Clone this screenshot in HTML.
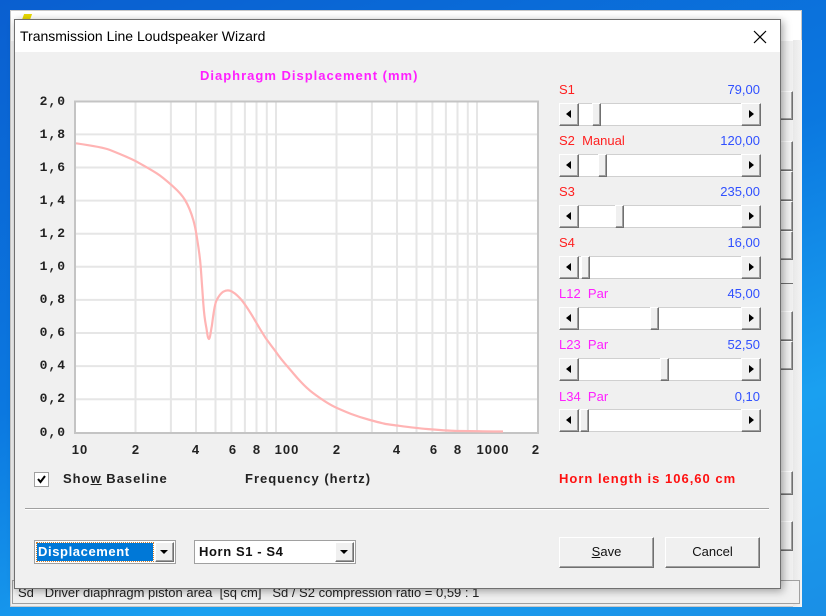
<!DOCTYPE html>
<html><head><meta charset="utf-8"><style>
*{margin:0;padding:0;box-sizing:border-box}
body{width:826px;height:616px;overflow:hidden;position:relative;background:linear-gradient(160deg,#0a5fd0 0%,#0b78e0 45%,#1aa0f0 75%,#1a8fe6 100%);font-family:"Liberation Sans",sans-serif}
.a{position:absolute}
.bgwin{left:10px;top:10px;width:792px;height:597px;background:#f0f0f0;border:1px solid #c8c8c8}
.dlg{left:14px;top:19px;width:767px;height:570px;background:#f0f0f0;border:1px solid #707070;box-shadow:2px 2px 8px rgba(0,0,0,.35)}
.lbl{font-size:13px;color:#ff2020;white-space:pre}
.val{font-size:13px;color:#3050ff;text-align:right;width:120px}
.sb{width:202px;height:23px;background:#fff;border:1px solid #d0d0d0}
.btn{background:#f0f0f0;border-top:1px solid #fff;border-left:1px solid #fff;border-right:1px solid #707070;border-bottom:1px solid #707070;box-shadow:inset -1px -1px 0 #a0a0a0}
.yl{font:bold 13px "Liberation Mono",monospace;color:#222;width:40px;text-align:right;left:26px;letter-spacing:1px}
.xl{font:bold 13px "Liberation Sans",sans-serif;color:#222;top:442px;width:40px;text-align:center;letter-spacing:1px}
.b{font:bold 13px "Liberation Sans",sans-serif;letter-spacing:1px;white-space:pre}
</style></head><body>
<div class="a bgwin"></div>
<div class="a" style="left:11px;top:11px;width:790px;height:30px;background:#fff"></div>
<div class="a" style="left:23px;top:14px;width:8px;height:6px;background:#e8d800;transform:skewX(-20deg)"></div>
<div class="a" style="left:793px;top:40px;width:9px;height:567px;background:linear-gradient(90deg,#e8e8e8,#f4f4f4)"></div>
<div class="a btn" style="left:780px;top:91px;width:13px;height:29px;border-left:none"></div>
<div class="a btn" style="left:780px;top:141px;width:13px;height:30px;border-left:none"></div>
<div class="a btn" style="left:780px;top:171px;width:13px;height:30px;border-left:none"></div>
<div class="a btn" style="left:780px;top:201px;width:13px;height:30px;border-left:none"></div>
<div class="a btn" style="left:780px;top:231px;width:13px;height:29px;border-left:none"></div>
<div class="a" style="left:780px;top:283px;width:13px;height:1px;background:#707070"></div>
<div class="a btn" style="left:780px;top:311px;width:13px;height:30px;border-left:none"></div>
<div class="a btn" style="left:780px;top:341px;width:13px;height:29px;border-left:none"></div>
<div class="a btn" style="left:780px;top:471px;width:13px;height:24px;border-left:none"></div>
<div class="a btn" style="left:780px;top:521px;width:13px;height:30px;border-left:none"></div>
<div class="a" style="left:12px;top:580px;width:788px;height:24px;border:1px solid #a0a0a0;background:#f0f0f0"></div>
<div class="a" style="left:18px;top:585px;font-size:13px;color:#222;white-space:pre">Sd   Driver diaphragm piston area  [sq cm]   Sd / S2 compression ratio = 0,59 : 1</div>

<div class="a dlg">
 <div class="a" style="left:0;top:0;width:765px;height:32px;background:#fff"></div>
 <div class="a" style="left:5px;top:8px;font-size:14px;color:#000">Transmission Line Loudspeaker Wizard</div>
 <svg class="a" style="left:738px;top:10px" width="14" height="14"><path d="M1 1L13 13M13 1L1 13" stroke="#000" stroke-width="1.2"/></svg>
</div>

<div class="a b" style="left:200px;top:68px;color:#ff20ff">Diaphragm Displacement (mm)</div>

<svg class="a" style="left:0;top:0" width="826" height="616">
 <rect x="75" y="101" width="463" height="332" fill="#fff"/>
 <g stroke="#e6e6e6" stroke-width="2">
  <path d="M135.5 101V433M170.9 101V433M196 101V433M215.5 101V433M231.4 101V433M244.9 101V433M256.5 101V433M266.8 101V433M276 101V433M336.5 101V433M371.9 101V433M397 101V433M416.5 101V433M432.4 101V433M445.9 101V433M457.5 101V433M467.8 101V433M477 101V433"/>
  <path d="M75 399.2H538M75 366.1H538M75 333H538M75 299.9H538M75 266.8H538M75 233.7H538M75 200.6H538M75 167.5H538M75 134.4H538"/>
 </g>
 <rect x="75" y="101.5" width="463" height="331.5" fill="none" stroke="#c4c4c4" stroke-width="2"/>
 <path d="M76 143.3C95 146 105 148 110 150S130 158 136.7 161.7S150 169 156.7 173.3S168 182 173.3 186.7S182 195 185 200S191 212 193.3 220S196 232 197.3 240S200 258 200.7 266.7S202 285 203.3 303.3S206 325 206.7 330S208 339 209 339S211 330 211.7 326.7S214 305 216.7 300S221 293 223.3 291.7S228 290 230 290.7S236 294 240 298.3S252 315 260 329S272 346 276.7 353S288 367 293 373S305 387 313 393S328 404 337 408S355 416 370 420S385 424 393 425S415 428 427 429S450 431 460 431S490 431.5 503 431.5" fill="none" stroke="#ffb4b4" stroke-width="2.2"/>
</svg>

<div class="a yl" style="top:94px">2,0</div>
<div class="a yl" style="top:127px">1,8</div>
<div class="a yl" style="top:160px">1,6</div>
<div class="a yl" style="top:193px">1,4</div>
<div class="a yl" style="top:226px">1,2</div>
<div class="a yl" style="top:259px">1,0</div>
<div class="a yl" style="top:292px">0,8</div>
<div class="a yl" style="top:325px">0,6</div>
<div class="a yl" style="top:358px">0,4</div>
<div class="a yl" style="top:391px">0,2</div>
<div class="a yl" style="top:425px">0,0</div>

<div class="a xl" style="left:60px">10</div>
<div class="a xl" style="left:116px">2</div>
<div class="a xl" style="left:176px">4</div>
<div class="a xl" style="left:213px">6</div>
<div class="a xl" style="left:237px">8</div>
<div class="a xl" style="left:267px">100</div>
<div class="a xl" style="left:317px">2</div>
<div class="a xl" style="left:377px">4</div>
<div class="a xl" style="left:414px">6</div>
<div class="a xl" style="left:438px">8</div>
<div class="a xl" style="left:470px;width:46px">1000</div>
<div class="a xl" style="left:516px">2</div>

<div class="a" style="left:34px;top:472px;width:15px;height:15px;background:#fff;border:1px solid #a0a0a0"></div>
<svg class="a" style="left:36px;top:474px" width="11" height="11"><path d="M2 5L4.5 8L9 2" stroke="#000" stroke-width="2" fill="none"/></svg>
<div class="a b" style="left:63px;top:471px;color:#222">Sho<u>w</u> Baseline</div>
<div class="a b" style="left:245px;top:471px;color:#222">Frequency (hertz)</div>
<div class="a b" style="left:559px;top:471px;color:#ff1010">Horn length is 106,60 cm</div>

<div class="a lbl" style="left:559px;top:82px">S1</div><div class="a val" style="left:640px;top:82px">79,00</div>
<div class="a lbl" style="left:559px;top:133px">S2  Manual</div><div class="a val" style="left:640px;top:133px">120,00</div>
<div class="a lbl" style="left:559px;top:184px">S3</div><div class="a val" style="left:640px;top:184px">235,00</div>
<div class="a lbl" style="left:559px;top:235px">S4</div><div class="a val" style="left:640px;top:235px">16,00</div>
<div class="a lbl" style="left:559px;top:286px;color:#ff20ff">L12  Par</div><div class="a val" style="left:640px;top:286px">45,00</div>
<div class="a lbl" style="left:559px;top:337px;color:#ff20ff">L23  Par</div><div class="a val" style="left:640px;top:337px">52,50</div>
<div class="a lbl" style="left:559px;top:389px;color:#ff20ff">L34  Par</div><div class="a val" style="left:640px;top:389px">0,10</div>

<div id="s"></div>
<script>
var tops=[103,154,205,256,307,358,409],th=[592,598,615,581,650,660,580],h='';
for(var i=0;i<7;i++){var t=tops[i];
h+='<div class="a sb" style="left:559px;top:'+t+'px"></div>';
h+='<div class="a btn" style="left:559px;top:'+t+'px;width:20px;height:23px"></div>';
h+='<div class="a" style="left:566px;top:'+(t+7)+'px;width:0;height:0;border-top:4.5px solid transparent;border-bottom:4.5px solid transparent;border-right:5px solid #000"></div>';
h+='<div class="a btn" style="left:741px;top:'+t+'px;width:20px;height:23px"></div>';
h+='<div class="a" style="left:749px;top:'+(t+7)+'px;width:0;height:0;border-top:4.5px solid transparent;border-bottom:4.5px solid transparent;border-left:5px solid #000"></div>';
h+='<div class="a btn" style="left:'+th[i]+'px;top:'+t+'px;width:9px;height:23px"></div>';}
document.getElementById('s').innerHTML=h;
</script>

<div class="a" style="left:25px;top:508px;width:744px;height:1px;background:#a0a0a0"></div>
<div class="a" style="left:25px;top:509px;width:744px;height:1px;background:#fff"></div>

<div class="a" style="left:34px;top:540px;width:142px;height:24px;background:#fff;border:1px solid #a0a0a0"></div>
<div class="a" style="left:37px;top:543px;width:116px;height:18px;background:#0078d7;outline:1px dotted #d08030"></div>
<div class="a b" style="left:38px;top:544px;color:#fff;letter-spacing:0.6px">Displacement</div>
<div class="a btn" style="left:155px;top:542px;width:19px;height:20px"></div>
<div class="a" style="left:160px;top:550px;border-left:4px solid transparent;border-right:4px solid transparent;border-top:4px solid #000"></div>

<div class="a" style="left:194px;top:540px;width:162px;height:24px;background:#fff;border:1px solid #a0a0a0"></div>
<div class="a b" style="left:199px;top:544px;color:#111;letter-spacing:0.6px">Horn S1 - S4</div>
<div class="a btn" style="left:335px;top:542px;width:19px;height:20px"></div>
<div class="a" style="left:340px;top:550px;border-left:4px solid transparent;border-right:4px solid transparent;border-top:4px solid #000"></div>

<div class="a btn" style="left:559px;top:537px;width:95px;height:31px;font-size:13px;color:#111;text-align:center;line-height:28px"><u>S</u>ave</div>
<div class="a btn" style="left:665px;top:537px;width:95px;height:31px;font-size:13px;color:#111;text-align:center;line-height:28px">Cancel</div>
</body></html>
